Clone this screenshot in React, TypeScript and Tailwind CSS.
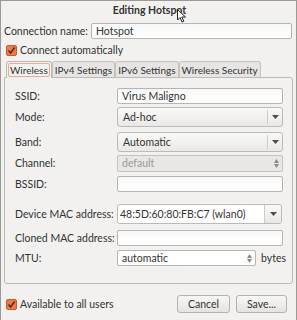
import React from "react";

const font = { fontFamily: '"Lato", "Liberation Sans", sans-serif' };

function Check() {
    return (
        <span className="flex h-[11px] w-[11px] shrink-0 items-center justify-center rounded-[2px] border border-[#c95a2c] bg-[#ef7a48]">
            <svg width="9" height="9" viewBox="0 0 9 9">
                <path d="M1.5 4.5 L3.6 7 L7.6 1.5" stroke="#4a2a1a" strokeWidth="1.4" fill="none" />
            </svg>
        </span>
    );
}

function Arrow() {
    return (
        <svg width="7" height="4" viewBox="0 0 7 4">
            <path d="M0 0 L7 0 L3.5 4 Z" fill="#4c4c4c" />
        </svg>
    );
}

function Spin() {
    return (
        <svg width="5" height="9" viewBox="0 0 5 9" className="mr-[3px]">
            <path d="M0 4 L5 4 L2.5 0 Z" fill="#8a8a8a" />
            <path d="M0 5 L5 5 L2.5 9 Z" fill="#8a8a8a" />
        </svg>
    );
}

function Entry({ value = "" }: { value?: string }) {
    return (
        <div className="flex h-4 w-full items-center rounded-[2px] border border-[#b8b5b0] bg-gradient-to-b from-[#f7f7f7] to-white px-1 text-[10.5px] text-[#333]">
            {value}
        </div>
    );
}

function Combo({ value }: { value: string }) {
    return (
        <div className="flex h-5 w-full items-center rounded-[3px] border border-[#bdbab5] bg-gradient-to-b from-[#f9f9f8] to-[#e9e8e6] text-[10.5px] text-[#333]">
            <span className="flex-1 px-[5px]">{value}</span>
            <span className="h-[14px] w-px bg-[#cfccc8]" />
            <span className="flex w-[14px] justify-center">
                <Arrow />
            </span>
        </div>
    );
}

function Row({ label, children, className = "" }: { label: string; children: React.ReactNode; className?: string }) {
    return (
        <div className={`flex items-center ${className}`}>
            <span className="w-[102px] shrink-0 text-[10.5px] text-[#333]">{label}</span>
            <div className="flex flex-1 items-center">{children}</div>
        </div>
    );
}

export default function App() {
    return (
        <div style={font} className="relative h-[320px] w-[297px] overflow-hidden whitespace-nowrap border-x border-t border-[#9d9a95] bg-[#f2f1f0] leading-none text-[#333]">
            <div className="flex h-[14px] items-end justify-center pl-[2px] text-[10.5px] font-bold">Editing Hotspot</div>
            {/* cursor */}
            <svg className="absolute left-[176px] top-[8px]" width="10" height="14" viewBox="0 0 10 14">
                <path d="M0.5 0.5 L0.5 11 L3 8.5 L5 13 L6.8 12.2 L4.8 8 L8.5 8 Z" fill="#fff" stroke="#222" strokeWidth="1" />
            </svg>

            <div className="mt-[8px] flex items-center pl-[3px] pr-[4px]">
                <span className="w-[87px] shrink-0 text-[10.5px]">Connection name:</span>
                <Entry value="Hotspot" />
            </div>

            <div className="mt-[6px] flex items-center gap-[3px] pl-[5px] text-[10.5px]">
                <Check />
                <span>Connect automatically</span>
            </div>

            <div className="mt-[5px] px-[3px]">
                <div className="flex items-end pl-[2px] text-[10px]">
                    <span className="-mb-px flex h-[17px] items-center rounded-t-[3px] border border-b-0 border-[#bdbab5] bg-[#f2f1f0] px-[1px]">
                        <span className="rounded-[2px] border border-[#f0a890] px-[1px] py-[1px]">Wireless</span>
                    </span>
                    <span className="flex h-[16px] items-center rounded-t-[3px] border border-b-0 border-[#c6c3be] bg-[#e6e5e3] px-[2px]">IPv4 Settings</span>
                    <span className="flex h-[16px] items-center rounded-t-[3px] border border-b-0 border-[#c6c3be] bg-[#e6e5e3] px-[2px]">IPv6 Settings</span>
                    <span className="flex h-[16px] items-center rounded-t-[3px] border border-b-0 border-[#c6c3be] bg-[#e6e5e3] px-[2px]">Wireless Security</span>
                </div>
                <div className="flex h-[207px] flex-col rounded-b-[3px] rounded-tr-[3px] border border-[#bdbab5] pl-[10px] pr-[9px] pt-[10px]">
                    <Row label="SSID:">
                        <Entry value="Virus Maligno" />
                    </Row>
                    <Row label="Mode:" className="mt-[3px]">
                        <Combo value="Ad-hoc" />
                    </Row>
                    <Row label="Band:" className="mt-[5px]">
                        <Combo value="Automatic" />
                    </Row>
                    <Row label="Channel:" className="mt-[3px]">
                        <div className="flex h-[17px] w-full items-center rounded-[2px] border border-[#c6c3be] bg-[#e8e7e6] pl-1 text-[10.5px] text-[#9a9896]">
                            <span className="flex-1">default</span>
                            <Spin />
                        </div>
                    </Row>
                    <Row label="BSSID:" className="mt-[4px]">
                        <Entry />
                    </Row>
                    <Row label="Device MAC address:" className="mt-[12px]">
                        <div className="w-[165px]">
                            <div className="flex h-5 w-full items-center rounded-[3px] border border-[#bdbab5] bg-white text-[10.5px]">
                                <span className="flex-1 px-[2px]">48:5D:60:80:FB:C7 (wlan0)</span>
                                <span className="h-[18px] w-px bg-[#cfccc8]" />
                                <span className="flex h-full w-[16px] items-center justify-center rounded-r-[3px] bg-gradient-to-b from-[#f9f9f8] to-[#e9e8e6]">
                                    <Arrow />
                                </span>
                            </div>
                        </div>
                    </Row>
                    <Row label="Cloned MAC address:" className="mt-[6px]">
                        <Entry />
                    </Row>
                    <Row label="MTU:" className="mt-[4px]">
                        <div className="flex h-4 w-[139px] items-center rounded-[2px] border border-[#b8b5b0] bg-white pl-1 text-[10.5px]">
                            <span className="flex-1">automatic</span>
                            <Spin />
                        </div>
                        <span className="ml-[5px] text-[10.5px]">bytes</span>
                    </Row>
                </div>
            </div>

            <div className="mt-[11px] flex items-center pl-[5px] pr-[9px]">
                <Check />
                <span className="ml-[3px] flex-1 text-[10.5px]">Available to all users</span>
                <button className="h-[18px] w-[53px] rounded-[3px] border border-[#b5b2ad] bg-gradient-to-b from-[#f7f7f6] to-[#e4e3e1] text-[10.5px]">Cancel</button>
                <button className="ml-[6px] h-[18px] w-[51px] rounded-[3px] border border-[#b5b2ad] bg-gradient-to-b from-[#f7f7f6] to-[#e4e3e1] text-[10.5px]">Save...</button>
            </div>
        </div>
    );
}
